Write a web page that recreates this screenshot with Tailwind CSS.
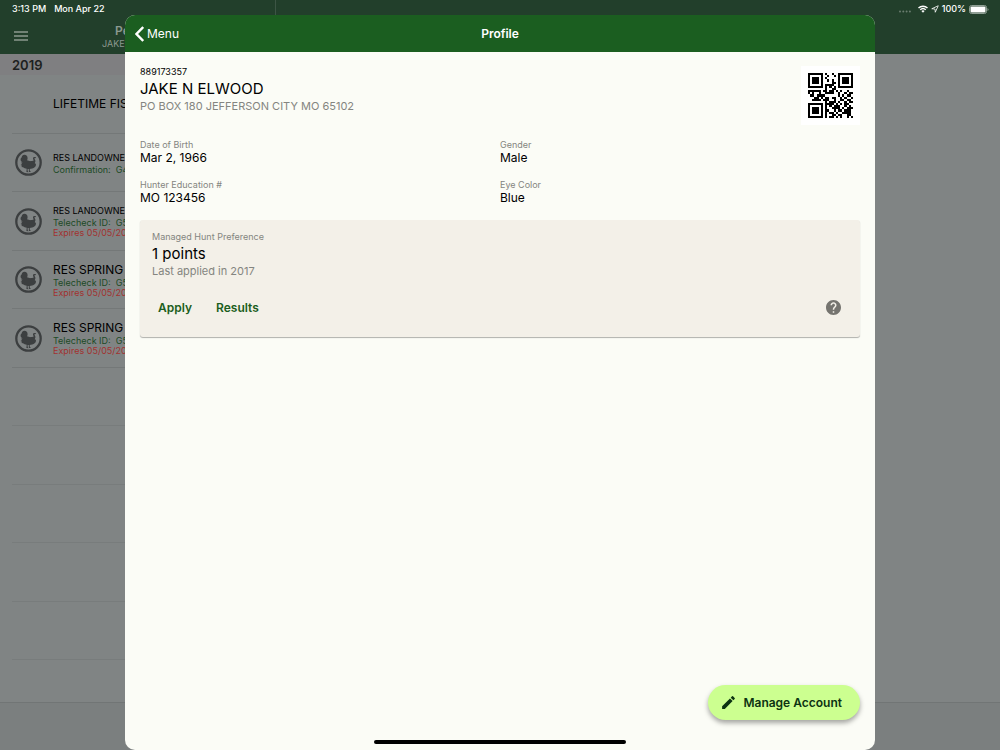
<!DOCTYPE html>
<html lang="en">
<head>
  <meta charset="UTF-8">
  <meta name="viewport" content="width=device-width, initial-scale=1.0">
  <title>Profile</title>
  <script src="https://cdn.jsdelivr.net/npm/@tailwindcss/browser@4"></script>
</head>
<body class="relative h-screen overflow-hidden bg-[#808484] font-['Inter','Liberation_Sans',sans-serif] text-black">

  <!-- Permits screen, dimmed behind the dialog -->
  <div class="flex h-full flex-col">
    <header class="flex h-[54px] flex-col bg-[#223f2b]">
      <div class="flex h-[18px] items-center justify-between pr-[11px] pl-3 text-[9px] font-medium text-white">
        <div class="flex gap-2">
          <span>3:13 PM</span>
          <span>Mon Apr 22</span>
        </div>
        <div class="flex items-center gap-[3px]">
          <svg class="h-2 w-3" viewBox="0 0 12 8" fill="#6a7d6f"><circle cx="1" cy="6.500" r="1"/><circle cx="4.300" cy="6.500" r="1"/><circle cx="7.600" cy="6.500" r="1"/><circle cx="10.900" cy="6.500" r="1"/></svg>
          <svg class="ml-1 h-2 w-[10px]" viewBox="0 0 20 16" fill="none" stroke="#fff" stroke-width="2.800"><path d="M1 6a13 13 0 0 1 18 0M4.500 9.700a8 8 0 0 1 11 0"/><path d="M10 15.500l-3.200-3.400a4.600 4.600 0 0 1 6.400 0z" fill="#fff" stroke="none"/></svg>
          <svg class="size-2" viewBox="0 0 16 16" fill="none" stroke="#fff" stroke-width="1.600" stroke-linejoin="round"><path d="M14.500 1.500L1.500 7.500l6.500.5.500 6.500z"/></svg>
          <span>100%</span>
          <svg class="h-[9px] w-[20px]" viewBox="0 0 20 9"><rect x=".5" y=".5" width="17" height="8" rx="2" fill="none" stroke="#8f9f94"/><rect x="1.500" y="1.500" width="15" height="6" rx="1" fill="#fff"/><path d="M18.500 3v3q1-.5 1-1.500t-1-1.500" fill="#8f9f94"/></svg>
        </div>
      </div>
      <div class="flex flex-1 items-center pl-[14px]">
        <button type="button" aria-label="Open menu">
          <svg class="h-[10px] w-[14px]" viewBox="0 0 14 10" stroke="#8c998f" stroke-width="1.300"><path d="M0 1h14M0 5h14M0 9h14"/></svg>
        </button>
        <div class="ml-[74px] flex flex-col whitespace-nowrap text-[#8c998f]">
          <span class="pl-[13px] text-xs leading-[14px] font-semibold">Pe</span>
          <span class="text-[9px] leading-[11px]">JAKE</span>
        </div>
      </div>
    </header>

    <div class="flex w-[275px] flex-1 flex-col">
      <h2 class="h-[21px] bg-[#7f7f81] px-3 pt-px text-[13px] leading-[21px] font-semibold text-[#1d1f20]">2019</h2>

      <ul class="grid flex-1 auto-rows-fr pb-[42px] pl-3 whitespace-nowrap">
        <li class="flex items-center border-b border-[#747878] pl-[41px] text-xs">LIFETIME FIS</li>
        <li class="flex items-center gap-[11px] border-b border-[#747878] pt-px pl-[3px]">
          <svg class="size-[27px] shrink-0"><use href="#turkey"/></svg>
          <div class="text-[9px] leading-[10px]">
            <p class="leading-[14px]">RES LANDOWNER</p>
            <p class="text-[#1c4a25]">Confirmation: &nbsp;G4</p>
          </div>
        </li>
        <li class="flex items-center gap-[11px] border-b border-[#747878] pt-px pl-[3px]">
          <svg class="size-[27px] shrink-0"><use href="#turkey"/></svg>
          <div class="text-[9px] leading-[10px]">
            <p class="leading-[14px]">RES LANDOWNER</p>
            <p class="text-[#1c4a25]">Telecheck ID: &nbsp;G5</p>
            <p class="text-[#a23230]">Expires 05/05/20</p>
          </div>
        </li>
        <li class="flex items-center gap-[11px] border-b border-[#747878] pt-px pl-[3px]">
          <svg class="size-[27px] shrink-0"><use href="#turkey"/></svg>
          <div class="text-[9px] leading-[10px]">
            <p class="text-xs leading-4">RES SPRING</p>
            <p class="text-[#1c4a25]">Telecheck ID: &nbsp;G5</p>
            <p class="text-[#a23230]">Expires 05/05/20</p>
          </div>
        </li>
        <li class="flex items-center gap-[11px] border-b border-[#747878] pt-px pl-[3px]">
          <svg class="size-[27px] shrink-0"><use href="#turkey"/></svg>
          <div class="text-[9px] leading-[10px]">
            <p class="text-xs leading-4">RES SPRING</p>
            <p class="text-[#1c4a25]">Telecheck ID: &nbsp;G5</p>
            <p class="text-[#a23230]">Expires 05/05/20</p>
          </div>
        </li>
        <li class="border-b border-[#787c7c]"></li>
        <li class="border-b border-[#787c7c]"></li>
        <li class="border-b border-[#787c7c]"></li>
        <li class="border-b border-[#787c7c]"></li>
        <li class="border-b border-[#787c7c]"></li>
      </ul>
    </div>
    <footer class="h-12 border-t border-[#717575] bg-[#7b7f7f]"></footer>
  </div>

  <!-- Split view divider -->
  <div class="absolute top-0 left-[275px] h-4 w-px bg-[#3d5545]"></div>

  <!-- Profile dialog -->
  <div class="absolute inset-x-0 top-[15px] bottom-0 mx-auto flex w-3/4 flex-col overflow-hidden rounded-[10px] bg-[#fbfcf6]" role="dialog" aria-labelledby="dialog-title">
    <header class="grid h-[37px] grid-cols-3 items-center bg-[#1b5e20] px-[10px] text-xs text-white">
      <button type="button" class="flex items-center gap-[3px] justify-self-start">
        <svg class="h-4 w-[9px]" viewBox="0 0 9 16" fill="none" stroke="#fff" stroke-width="2.400"><path d="M8.200 1L1.500 8l6.700 7"/></svg>
        Menu
      </button>
      <h1 id="dialog-title" class="text-center font-semibold">Profile</h1>
    </header>

    <main class="flex-1 px-[15px] pt-[14px]">
      <section class="flex justify-between">
        <div>
          <p class="text-[9px] leading-3">889173357</p>
          <p class="text-[15px] leading-[21px]">JAKE N ELWOOD</p>
          <p class="text-[11px] leading-[14px] text-[#848580]">PO BOX 180 JEFFERSON CITY MO 65102</p>
        </div>
        <svg id="qr" class="size-[59px] bg-white p-[7px]" viewBox="0 0 21 21" shape-rendering="crispEdges" role="img" aria-label="Permit QR code"></svg>
      </section>

      <dl class="mt-[14px] grid grid-cols-2 gap-y-[14px]">
        <div>
          <dt class="text-[9px] leading-3 text-[#848580]">Date of Birth</dt>
          <dd class="text-xs leading-[14px]">Mar 2, 1966</dd>
        </div>
        <div>
          <dt class="text-[9px] leading-3 text-[#848580]">Gender</dt>
          <dd class="text-xs leading-[14px]">Male</dd>
        </div>
        <div>
          <dt class="text-[9px] leading-3 text-[#848580]">Hunter Education #</dt>
          <dd class="text-xs leading-[14px]">MO 123456</dd>
        </div>
        <div>
          <dt class="text-[9px] leading-3 text-[#848580]">Eye Color</dt>
          <dd class="text-xs leading-[14px]">Blue</dd>
        </div>
      </dl>

      <section class="mt-[15px] rounded-[3px] bg-[#f3f0e8] px-3 pt-[11px] pb-[15px] shadow-[0_1px_1px_rgba(0,0,0,0.3)]">
        <h2 class="text-[9px] leading-3 text-[#848580]">Managed Hunt Preference</h2>
        <p class="text-[15px] leading-[21px]">1 points</p>
        <p class="text-[11px] leading-[14px] text-[#848580]">Last applied in 2017</p>
        <div class="mt-[15px] flex h-[29px] items-center gap-6 px-[6px] text-xs font-semibold text-[#1b5e20]">
          <button type="button">Apply</button>
          <button type="button">Results</button>
          <button type="button" class="mr-px ml-auto" aria-label="Help">
            <svg class="size-[15px]" viewBox="2 2 20 20" fill="#75746f"><path d="M12 2C6.480 2 2 6.480 2 12s4.480 10 10 10 10-4.480 10-10S17.520 2 12 2zm1 17h-2v-2h2v2zm2.070-7.750l-.9.920C13.450 12.900 13 13.500 13 15h-2v-.5c0-1.100.450-2.100 1.170-2.830l1.240-1.260c.370-.360.590-.860.590-1.410 0-1.100-.9-2-2-2s-2 .9-2 2H8c0-2.210 1.790-4 4-4s4 1.790 4 4c0 .880-.360 1.680-.930 2.250z"/></svg>
          </button>
        </div>
      </section>
    </main>

    <footer class="flex flex-col">
      <button type="button" class="mr-[15px] mb-5 flex h-[35px] items-center gap-[6px] self-end rounded-full bg-[#ccff90] pr-[18px] pl-3 text-xs font-semibold text-[#0c3312] shadow-[0_3px_5px_rgba(0,0,0,0.35)]">
        <svg class="size-[17px]" viewBox="0 0 24 24" fill="#0c3312"><path d="M3 17.250V21h3.750L17.810 9.940l-3.750-3.750L3 17.250zM20.710 7.040a1 1 0 0 0 0-1.410l-2.340-2.340a1 1 0 0 0-1.410 0l-1.830 1.830 3.750 3.750 1.830-1.830z"/></svg>
        Manage Account
      </button>
      <div class="mb-[6px] h-1 w-[252px] self-center rounded-full bg-black"></div>
    </footer>
  </div>

  <svg class="hidden">
    <symbol id="turkey" viewBox="0 0 27 27">
      <circle cx="13.500" cy="13.500" r="12.200" fill="none" stroke="#3c3f40" stroke-width="2.300"/>
      <path fill="#3c3f40" d="M9.300 5.800c2-.1 3.400 1.500 3.300 3.400 0 .8-.3 1.500-.6 2.100 1.500.2 2.400 1 3.700.8 1-.2 1.900-.5 2.800-.4.3-.9-.6-1.600-.5-2.500.1-1 1.100-1.500 2.500-1.100l.6.900-1.600.2c-.3.700.8 1.400.9 2.600.1 1-.3 1.700-.6 2.400 1 .2 1.400 1 1.100 2-.4 1.700-1.700 2.800-3.600 3.300-1 .3-1.800.4-2.600.4l.2 2.200 1.200.9h-2.200l-.1-3h-1.200l.1 2.100.8 1.100-2.100-.2.300-3.200c-1.400-.2-2.700-.7-3.700-1.600l-1.500-.1.500-1.300-1.400-.9 1.400-.8-.8-1.500 1.500-.3c-1.300-.5-2.300-1.500-2.100-3 .1-1 .7-1.500 1.100-2 .2-1.400 1.100-2.400 2.600-2.500z"/>
    </symbol>
  </svg>

  <script>
    const modules = [
      '#######.#..#..#######',
      '#.....#..#..#.#.....#',
      '#.###.#.#.....#.###.#',
      '#.###.#..#.#..#.###.#',
      '#.###.#....##.#.###.#',
      '#.....#.####..#.....#',
      '#######.#.#.#.#######',
      '........#..##........',
      '######.##.##.#.#..#..',
      '#.#..#..####..#..#.##',
      '.##.####......#.#.##.',
      '...##.#.##.##..#.#..#',
      '..####.###..#..##.##.',
      '........#.###.#..#.##',
      '#######.####.#.#.##..',
      '#.....#.#.#.###..#.#.',
      '#.###.#.#..####.#.###',
      '#.###.#.##..#.##.###.',
      '#.###.#.#.##.#..####.',
      '#.....#.#..##.##..##.',
      '#######.#.##.#.#..#.#'
    ];
    let d = '';
    modules.forEach((row, y) => {
      [...row].forEach((cell, x) => {
        if (cell === '#') d += `M${x} ${y}h1v1h-1z`;
      });
    });
    document.getElementById('qr').innerHTML = `<path d="${d}"/>`;
  </script>
</body>
</html>
